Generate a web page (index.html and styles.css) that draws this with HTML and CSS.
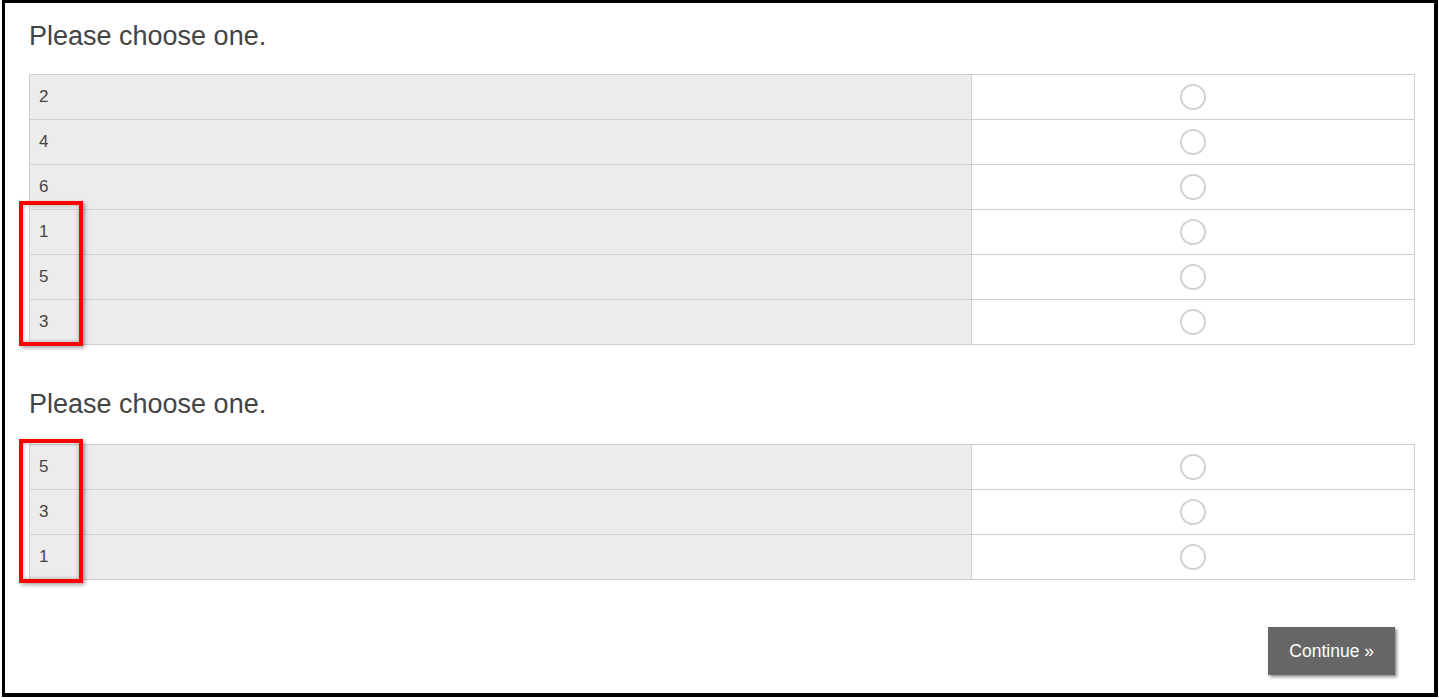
FILE: index.html
```html
<!DOCTYPE html>
<html lang="en">
<head>
    <meta charset="UTF-8">
    <meta name="viewport" content="width=device-width, initial-scale=1.0">
    <title>Survey</title>
    <link rel="stylesheet" href="styles.css">
</head>
<body>
    <div class="frame">
        <h2 class="question">Please choose one.</h2>
        <div class="choices">
            <table class="grid">
                <tr><td class="label">2</td><td class="pick"><input type="radio" name="q1"></td></tr>
                <tr><td class="label">4</td><td class="pick"><input type="radio" name="q1"></td></tr>
                <tr><td class="label">6</td><td class="pick"><input type="radio" name="q1"></td></tr>
                <tr><td class="label">1</td><td class="pick"><input type="radio" name="q1"></td></tr>
                <tr><td class="label">5</td><td class="pick"><input type="radio" name="q1"></td></tr>
                <tr><td class="label">3</td><td class="pick"><input type="radio" name="q1"></td></tr>
            </table>
            <div class="mark mark-one"></div>
        </div>

        <h2 class="question second">Please choose one.</h2>
        <div class="choices">
            <table class="grid">
                <tr><td class="label">5</td><td class="pick"><input type="radio" name="q2"></td></tr>
                <tr><td class="label">3</td><td class="pick"><input type="radio" name="q2"></td></tr>
                <tr><td class="label">1</td><td class="pick"><input type="radio" name="q2"></td></tr>
            </table>
            <div class="mark mark-two"></div>
        </div>

        <div class="actions">
            <button class="next">Continue &raquo;</button>
        </div>
    </div>
</body>
</html>
```

FILE: styles.css
```css
body{
    margin: 0;
    padding: 0;
    background-color: white;
    font-family: "Liberation Sans", Arial, sans-serif;
    color: #444;
}
.frame{
    margin-left: 2px;
    width: 1436px;
    height: 697px;
    box-sizing: border-box;
    border-style: solid;
    border-color: #000;
    border-width: 3px 4px 4px 3px;
    padding: 18px 19px 0 24px;
    background-color: white;
}
.question{
    margin: 0 0 23px 0;
    font-size: 27px;
    font-weight: normal;
    line-height: 30px;
    color: #444;
}
.question.second{
    margin-top: 44px;
    margin-bottom: 25px;
}
.choices{
    position: relative;
}
.grid{
    width: 100%;
    border-collapse: collapse;
}
.grid td{
    border: 1px solid #cfcfcf;
    height: 45px;
    padding: 0;
    box-sizing: border-box;
}
.grid td.label{
    width: 942px;
    padding-left: 9px;
    background-color: #ececec;
    font-size: 17px;
    color: #444;
}
.grid td.pick{
    text-align: center;
    background-color: white;
}
.pick input{
    appearance: none;
    -webkit-appearance: none;
    width: 26px;
    height: 26px;
    margin: 0;
    vertical-align: middle;
    border: 2px solid #d2d2d2;
    border-radius: 50%;
    background-color: white;
    cursor: pointer;
}
/* red highlight frames drawn over the first column */
.mark{
    position: absolute;
    left: -10px;
    width: 64px;
    box-sizing: border-box;
    border: 4px solid #ff0000;
    box-shadow: 2px 2px 4px rgba(0,0,0,.35), inset 0 0 4px rgba(0,0,0,.3);
}
.mark-one{
    top: 127px;
    height: 145px;
}
.mark-two{
    top: -5px;
    height: 144px;
}
.actions{
    display: flex;
    justify-content: flex-end;
    padding-right: 20px;
    margin-top: 47px;
}
.next{
    height: 48px;
    padding: 0 21px;
    border: none;
    background-color: #666;
    color: white;
    font-family: "Liberation Sans", Arial, sans-serif;
    font-size: 17.5px;
    box-shadow: 2px 2px 3px rgba(0,0,0,.45);
    cursor: pointer;
}
```
